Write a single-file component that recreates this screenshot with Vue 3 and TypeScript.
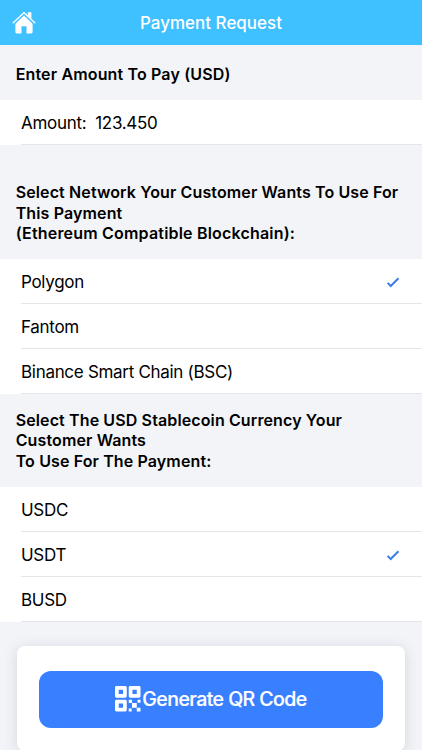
<script setup lang="ts">
import { ref } from 'vue'

const amount = ref('123.450')
const networks: string[] = ['Polygon', 'Fantom', 'Binance Smart Chain (BSC)']
const currencies: string[] = ['USDC', 'USDT', 'BUSD']
const network = ref('Polygon')
const currency = ref('USDT')
</script>

<template>
  <div class="screen">
    <header class="bar">
      <svg class="home" viewBox="0 0 24 24" aria-label="Home">
        <path class="roof" d="M1.200 11.700 12 1.700 22.800 11.700" />
        <path class="house" d="M12 4.600 3.400 12.700v8.400c0 .8.5 1.300 1.300 1.300h4.800v-7.200h5v7.200h4.800c.8 0 1.300-.5 1.300-1.300v-8.400z" />
        <path class="house" d="M15.800 1.200h3.600v6.500l-3.600-3.400z" />
      </svg>
      <h1>Payment Request</h1>
    </header>

    <h2 class="label amount-label">Enter Amount To Pay (USD)</h2>
    <div class="list">
      <div class="row"><span class="text">Amount:&nbsp; {{ amount }}</span></div>
    </div>

    <h2 class="label network-label">
      Select Network Your Customer Wants To Use For<br />This Payment<br /><span class="hint">(Ethereum Compatible Blockchain):</span>
    </h2>
    <div class="list">
      <div v-for="item in networks" :key="item" class="row" @click="network = item">
        <span class="text">{{ item }}</span>
        <svg v-if="item === network" class="check" viewBox="0 0 14 12"><path d="M1.600 6.900 4.700 10 12.500 2.300" /></svg>
      </div>
    </div>

    <h2 class="label currency-label">
      Select The USD Stablecoin Currency Your<br />Customer Wants<br />To Use For The Payment:
    </h2>
    <div class="list">
      <div v-for="item in currencies" :key="item" class="row" @click="currency = item">
        <span class="text">{{ item }}</span>
        <svg v-if="item === currency" class="check" viewBox="0 0 14 12"><path d="M1.600 6.900 4.700 10 12.500 2.300" /></svg>
      </div>
    </div>

    <section class="card">
      <button class="generate" type="button">
        <svg class="qr" viewBox="0 0 26 26">
          <path
            fill-rule="evenodd"
            d="M1.500 0h9A1.500 1.500 0 0 1 12 1.500v9a1.500 1.500 0 0 1-1.500 1.500h-9A1.500 1.500 0 0 1 0 10.500v-9A1.500 1.500 0 0 1 1.500 0zM3.800 3.800v4.400h4.400V3.800z
            M15.500 0h9A1.500 1.500 0 0 1 26 1.500v9a1.500 1.500 0 0 1-1.500 1.500h-9a1.500 1.500 0 0 1-1.500-1.500v-9A1.500 1.500 0 0 1 15.500 0zM17.800 3.800v4.400h4.400V3.800z
            M1.500 14h9a1.500 1.500 0 0 1 1.500 1.500v9a1.500 1.500 0 0 1-1.500 1.500h-9A1.500 1.500 0 0 1 0 24.500v-9A1.500 1.500 0 0 1 1.500 14zM3.800 17.800v4.400h4.400v-4.400z"
          />
          <path d="M14 14h3.300v3.300H14zM23 14h3v3h-3zM17.300 17.300h4.900v4.900h-4.900zM14 23h3v3h-3zM22.200 22.200H26V26h-3.800z" />
        </svg>
        <span>Generate QR Code</span>
      </button>
    </section>
  </div>
</template>

<style>
body {
  margin: 0;
  overflow: hidden;
}
</style>

<style scoped>
.screen {
  height: 750px;
  overflow: hidden;
  background: #f3f4f8;
  color: #000;
  font-family: Inter, "Liberation Sans", sans-serif;
}
.bar {
  display: grid;
  grid-template-columns: 48px 1fr 48px;
  align-items: center;
  height: 45px;
  background: #3fc0ff;
  color: #fff;
}
.home {
  width: 24px;
  height: 24px;
  margin-left: 12px;
}
.roof {
  fill: none;
  stroke: #fff;
  stroke-width: 1.3;
  stroke-linecap: round;
}
.house {
  fill: #fff;
}
h1 {
  margin: 0;
  font-size: 17px;
  line-height: 20px;
  font-weight: 500;
  text-align: center;
  white-space: nowrap;
}
.label {
  box-sizing: border-box;
  margin: 0;
  padding-left: 15.7px;
  font-size: 16px;
  line-height: 20.3px;
  font-weight: 600;
  letter-spacing: 0.12px;
  white-space: nowrap;
}
.hint {
  letter-spacing: 0.19px;
}
.amount-label {
  height: 55px;
  padding-top: 19px;
  letter-spacing: 0.15px;
}
.network-label {
  height: 114px;
  padding-top: 37.4px;
}
.currency-label {
  height: 93px;
  padding-top: 16.2px;
}
.list {
  background: #fff;
}
.row {
  display: flex;
  align-items: center;
  justify-content: space-between;
  box-sizing: border-box;
  height: 45px;
  margin-left: 21px;
  padding: 1px 22px 0 0;
  border-bottom: 1px solid #e6e6ea;
}
.text {
  font-size: 17px;
  line-height: 22px;
  letter-spacing: -0.3px;
}
.check {
  width: 14px;
  height: 12px;
}
.check path {
  fill: none;
  stroke: #3b7de9;
  stroke-width: 2;
}
.card {
  height: 105px;
  margin: 24px 17px 0;
  padding: 24.5px 22px;
  box-sizing: border-box;
  border-radius: 8px;
  background: #fff;
  box-shadow: 0 2px 14px rgba(60, 65, 80, 0.16);
}
.generate {
  display: flex;
  align-items: center;
  justify-content: center;
  gap: 1.5px;
  width: 100%;
  height: 57px;
  padding: 0;
  border: 0;
  border-radius: 12px;
  background: #3880ff;
  color: #fff;
  font: 500 19.5px/24px Inter, "Liberation Sans", sans-serif;
  letter-spacing: -0.56px;
  white-space: nowrap;
}
.qr {
  width: 25.5px;
  height: 25.5px;
  fill: #fff;
}
.generate span {
  -webkit-text-stroke: 0.2px #fff;
}
</style>
